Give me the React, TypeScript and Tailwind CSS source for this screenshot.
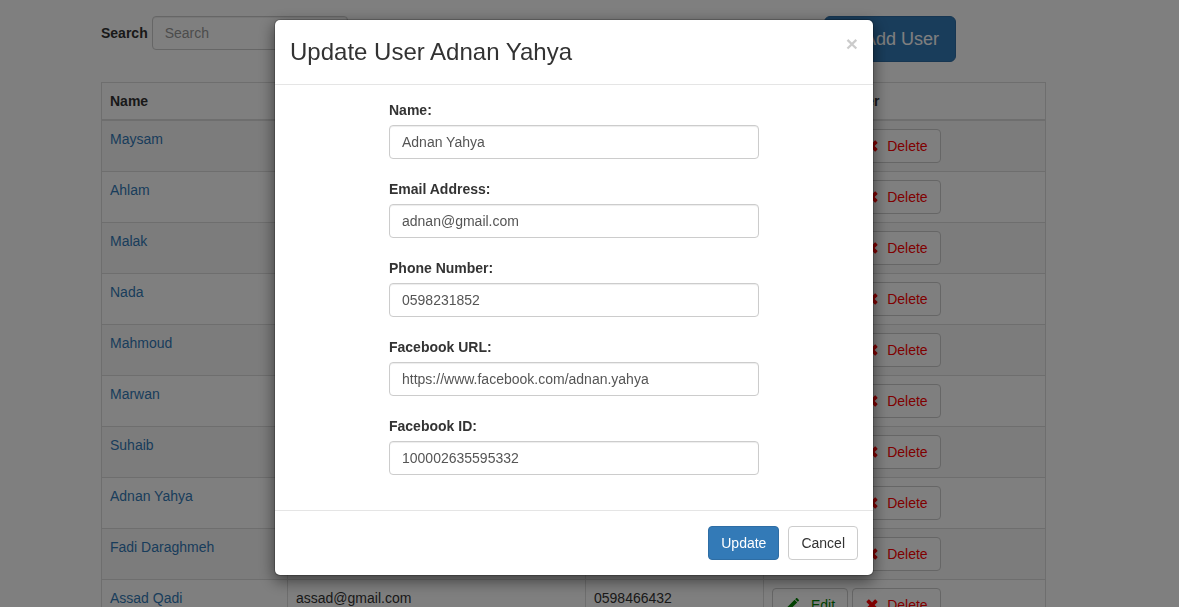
import { useState } from "react";

type User = { name: string; email: string; phone: string };

const users: User[] = [
  { name: "Maysam", email: "maysam@gmail.com", phone: "0598466421" },
  { name: "Ahlam", email: "ahlam@gmail.com", phone: "0598466422" },
  { name: "Malak", email: "malak@gmail.com", phone: "0598466423" },
  { name: "Nada", email: "nada@gmail.com", phone: "0598466424" },
  { name: "Mahmoud", email: "mahmoud@gmail.com", phone: "0598466425" },
  { name: "Marwan", email: "marwan@gmail.com", phone: "0598466426" },
  { name: "Suhaib", email: "suhaib@gmail.com", phone: "0598466427" },
  { name: "Adnan Yahya", email: "adnan@gmail.com", phone: "0598231852" },
  { name: "Fadi Daraghmeh", email: "fadi@gmail.com", phone: "0598466429" },
  { name: "Assad Qadi", email: "assad@gmail.com", phone: "0598466432" },
];

const fields = [
  { id: "name", label: "Name:", value: "Adnan Yahya" },
  { id: "email", label: "Email Address:", value: "adnan@gmail.com" },
  { id: "phone", label: "Phone Number:", value: "0598231852" },
  { id: "facebook-url", label: "Facebook URL:", value: "https://www.facebook.com/adnan.yahya" },
  { id: "facebook-id", label: "Facebook ID:", value: "100002635595332" },
];

const inputClass =
  "h-[34px] rounded-sm border border-[#ccc] bg-white px-3 text-sm text-[#555] shadow-[inset_0_1px_1px_rgba(0,0,0,0.075)] placeholder:text-[#999]";
const buttonClass = "inline-flex h-[34px] items-center rounded-sm border px-3 text-sm";

function PencilIcon() {
  return (
    <svg viewBox="0 0 14 14" className="size-3.5 fill-current" aria-hidden="true">
      <path d="M11.1.3c.4-.4.8-.4 1.2 0l1.4 1.4c.4.4.4.8 0 1.2l-.9.9-2.6-2.6zM9.6 1.8l2.6 2.6-8 8-3.2 1 .6-3.6z" />
    </svg>
  );
}

function RemoveIcon() {
  return (
    <svg viewBox="0 0 14 14" className="size-3.5 fill-current" aria-hidden="true">
      <path d="M3.4 1.6q.4-.3.8 0L7 4.4l2.8-2.8q.4-.3.8 0l1.8 1.8q.3.4 0 .8L9.6 7l2.8 2.8q.3.4 0 .8l-1.8 1.8q-.4.3-.8 0L7 9.6l-2.8 2.8q-.4.3-.8 0l-1.8-1.8q-.3-.4 0-.8L4.4 7 1.6 4.2q-.3-.4 0-.8z" />
    </svg>
  );
}

function PlusIcon() {
  return (
    <svg viewBox="0 0 18 18" className="size-[18px] fill-current" aria-hidden="true">
      <path d="M7 2h4v5h5v4h-5v5H7v-5H2V7h5z" />
    </svg>
  );
}

function UserTable() {
  return (
    <table className="w-full table-fixed border-collapse border border-[#ddd] text-left">
      <colgroup>
        <col className="w-[186px]" />
        <col className="w-[298px]" />
        <col className="w-[178px]" />
        <col />
      </colgroup>
      <thead>
        <tr>
          {["Name", "Email", "Phone Number", "Edit/Delete User"].map((title) => (
            <th key={title} className="border border-b-2 border-[#ddd] p-2 font-bold">
              {title}
            </th>
          ))}
        </tr>
      </thead>
      <tbody>
        {users.map((user) => (
          <tr key={user.name} className="odd:bg-[#f9f9f9]">
            <td className="border border-[#ddd] p-2 align-top">
              <a href="#" className="text-[#337ab7]">{user.name}</a>
            </td>
            <td className="border border-[#ddd] p-2 align-top">{user.email}</td>
            <td className="border border-[#ddd] p-2 align-top">{user.phone}</td>
            <td className="border border-[#ddd] p-2 align-top">
              <div className="flex gap-1">
                <button type="button" className={`${buttonClass} gap-3 border-[#ccc] bg-white text-[#008000]`}>
                  <PencilIcon />
                  Edit
                </button>
                <button type="button" className={`${buttonClass} gap-2 border-[#ccc] bg-white text-[#f00]`}>
                  <RemoveIcon />
                  Delete
                </button>
              </div>
            </td>
          </tr>
        ))}
      </tbody>
    </table>
  );
}

function UpdateDialog() {
  const [values, setValues] = useState(fields.map((field) => field.value));

  return (
    <div
      role="dialog"
      aria-modal="true"
      aria-labelledby="dialog-title"
      className="w-full max-w-[600px] rounded-md border border-black/20 bg-white bg-clip-padding shadow-[0_5px_15px_rgba(0,0,0,0.5)]"
    >
      <div className="flex items-start justify-between border-b border-[#e5e5e5] p-[15px]">
        <h4 id="dialog-title" className="text-2xl leading-[34px]">Update User Adnan Yahya</h4>
        <button type="button" aria-label="Close" className="text-[21px] leading-[18px] font-bold text-black opacity-20">
          ×
        </button>
      </div>
      <form>
        <div className="p-[15px]">
          <div className="mx-auto max-w-[370px]">
            {fields.map((field, index) => (
              <div key={field.id} className="mb-5 flex flex-col gap-[5px]">
                <label htmlFor={field.id} className="font-bold">{field.label}</label>
                <input
                  id={field.id}
                  type="text"
                  value={values[index]}
                  onChange={(event) =>
                    setValues(values.map((value, i) => (i === index ? event.target.value : value)))
                  }
                  className={inputClass}
                />
              </div>
            ))}
          </div>
        </div>
        <div className="flex justify-end gap-[9px] border-t border-[#e5e5e5] p-[15px]">
          <button type="button" className={`${buttonClass} border-[#2e6da4] bg-[#337ab7] text-white`}>Update</button>
          <button type="button" className={`${buttonClass} border-[#ccc] bg-white text-[#333]`}>Cancel</button>
        </div>
      </form>
    </div>
  );
}

export default function App() {
  return (
    <div className="h-screen overflow-hidden bg-white font-['Liberation_Sans',Arial,sans-serif] text-sm text-[#333]">
      <div className="pt-4 pr-8">
        <main className="mx-auto max-w-[945px]">
          <div className="mb-5 flex items-start justify-between pr-[90px]">
            <div className="flex items-center gap-1">
              <label htmlFor="search" className="font-bold">Search</label>
              <input id="search" type="text" placeholder="Search" className={`${inputClass} w-[196px]`} />
            </div>
            <button
              type="button"
              className="flex h-[46px] items-center gap-[5px] rounded-md border border-[#2e6da4] bg-[#337ab7] px-4 text-lg text-white"
            >
              <PlusIcon />
              Add User
            </button>
          </div>
          <UserTable />
        </main>
      </div>
      <div className="fixed inset-0 flex items-start justify-center bg-black/50 pt-[19px] pr-[31px]">
        <UpdateDialog />
      </div>
    </div>
  );
}
